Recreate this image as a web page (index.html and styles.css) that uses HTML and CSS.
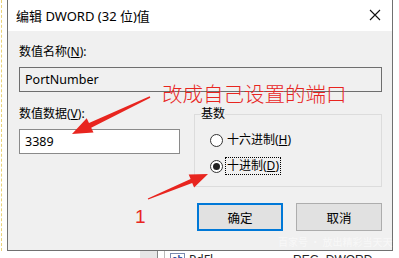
FILE: index.html
```html
<!DOCTYPE html>
<html lang="zh-CN">
<head>
    <meta charset="UTF-8">
    <meta name="viewport" content="width=device-width, initial-scale=1.0">
    <title>编辑 DWORD (32 位)值</title>
    <link rel="stylesheet" href="styles.css">
</head>
<body>

<div class="screen">
    <div class="top-row">
        <div class="left-strip"></div>

        <div class="dialog">
            <div class="titlebar">
                <span class="title">编辑 DWORD (32 位)值</span>
                <span class="close">
                    <svg width="12" height="12" viewBox="0 0 12 12">
                        <path d="M1 1 L11 11 M11 1 L1 11" stroke="#111" stroke-width="1.1" fill="none"/>
                    </svg>
                </span>
            </div>

            <div class="body">
                <div class="label">数值名称(<u>N</u>):</div>
                <div class="field readonly">PortNumber</div>

                <div class="data-row">
                    <div class="data-col">
                        <div class="label">数值数据(<u>V</u>):</div>
                        <div class="field small">3389</div>
                    </div>

                    <fieldset class="base-group">
                        <legend>基数</legend>
                        <div class="radio-row">
                            <span class="radio"></span>
                            <span class="radio-text">十六进制(<u>H</u>)</span>
                        </div>
                        <div class="radio-row">
                            <span class="radio checked"></span>
                            <span class="radio-text focus">十进制(<u>D</u>)</span>
                        </div>
                    </fieldset>
                </div>

                <div class="buttons">
                    <button class="btn default">确定</button>
                    <button class="btn">取消</button>
                </div>
            </div>
        </div>

        <div class="right-strip"></div>
    </div>

    <div class="list-row">
        <div class="list-gray"></div>
        <div class="list-sep"></div>
        <div class="list-icon">ab</div>
        <div class="list-name">PdFl</div>
        <div class="list-type">REG_DWORD</div>
    </div>

    <!-- annotations drawn on top of the screenshot -->
    <svg class="marks" width="399" height="258" viewBox="0 0 399 258">
        <polygon fill="#e8251f" points="149.7,96.3 89.0,123.1 86.7,118.2 72,134 93.5,132.6 91.2,127.7 150.3,97.7"/>
        <polygon fill="#e8251f" points="147.8,198.4 190.6,178.9 188.7,174.4 208,174 194.1,187.4 192.2,182.9 148.2,199.6"/>
    </svg>
    <div class="note">改成自己设置的端口</div>
    <div class="step">1</div>
    <div class="watermark">百家号 · 放出精彩当天天</div>
</div>

</body>
</html>
```

FILE: styles.css
```css
body {
    margin: 0;
    background-color: #fff;
    font-family: "Noto Sans", "Noto Sans CJK SC", sans-serif;
    font-size: 12px;
    color: #000;
}
.screen {
    position: relative;
    width: 399px;
    height: 258px;
    overflow: hidden;
}
.top-row {
    display: flex;
}
.left-strip {
    width: 7px;
    border-left: 1px dashed #e9d27a;
    margin-left: 1px;
    box-sizing: border-box;
    width: 6px;
}
.right-strip {
    flex: 1;
}
.dialog {
    width: 386px;
    height: 251px;
    box-sizing: border-box;
    border: 1px solid #707070;
    border-top: none;
    display: flex;
    flex-direction: column;
}
.titlebar {
    height: 31px;
    background-color: #fff;
    display: flex;
    align-items: center;
    justify-content: space-between;
    padding: 0 11px 0 8px;
}
.title {
    font-size: 13px;
    margin-top: -1px;
}
.close {
    display: flex;
    margin-top: -2px;
}
.body {
    flex: 1;
    background-color: #f0f0f0;
    padding: 13px 10px 0 11px;
}
.label {
    line-height: 16px;
    height: 16px;
}
.field {
    height: 25px;
    box-sizing: border-box;
    border: 1px solid #7a7a7a;
    margin-top: 7px;
    padding-left: 5px;
    display: flex;
    align-items: center;
    font-size: 12.5px;
}
.readonly {
    background-color: #f0f0f0;
    border-color: #6e6e6e;
}
.small {
    width: 161px;
    background-color: #fff;
    border-color: #8a8a8a;
}
.data-row {
    display: flex;
    justify-content: space-between;
    margin-top: 14px;
}
.base-group {
    width: 188px;
    height: 81px;
    box-sizing: border-box;
    margin: 0;
    border: 1px solid #dcdcdc;
    padding: 5px 0 0 15px;
}
.base-group legend {
    padding: 0;
    margin-left: -9px;
    line-height: 16px;
}
.radio-row {
    display: flex;
    align-items: center;
    height: 26px;
}
.radio {
    width: 13px;
    height: 13px;
    box-sizing: border-box;
    border: 1px solid #333;
    border-radius: 50%;
    background-color: #fff;
    display: flex;
    align-items: center;
    justify-content: center;
    margin-right: 2px;
}
.checked::after {
    content: "";
    width: 7px;
    height: 7px;
    border-radius: 50%;
    background-color: #222;
}
.radio-text {
    padding: 0 1px;
    line-height: 16px;
    border: 1px solid transparent;
}
.focus {
    border: 1px dotted #000;
}
.buttons {
    display: flex;
    justify-content: flex-end;
    gap: 13px;
    margin-top: 16px;
    padding-right: 0;
}
.btn {
    width: 86px;
    height: 28px;
    box-sizing: border-box;
    border: 1px solid #adadad;
    background-color: #e1e1e1;
    font-family: "Noto Sans CJK SC", sans-serif;
    font-size: 12.5px;
    color: #000;
    padding: 0;
}
.default {
    border: 2px solid #0078d7;
}
.list-row {
    display: flex;
    align-items: flex-start;
    height: 7px;
    font-size: 12px;
    line-height: 14px;
    color: #222;
}
.list-gray {
    width: 17px;
    height: 7px;
    margin-left: 140px;
    background-color: #e6e6e6;
}
.list-sep {
    width: 6px;
    height: 7px;
    border-left: 1px solid #888;
    border-right: 1px solid #bbb;
}
.list-icon {
    margin-left: 5px;
    font-size: 9px;
    font-weight: bold;
    color: #2a4a9a;
    border: 1px solid #7a8bb0;
    padding: 0 1px;
    line-height: 10px;
    margin-top: 2px;
}
.list-name {
    margin-left: 4px;
    margin-top: 2px;
}
.list-type {
    margin-left: 80px;
    margin-top: 2px;
    font-family: "Liberation Sans", sans-serif;
}
.marks {
    position: absolute;
    left: 0;
    top: 0;
}
.note {
    position: absolute;
    left: 162px;
    top: 80px;
    font-size: 20.5px;
    line-height: 26px;
    color: #e8251f;
    font-family: "Noto Sans CJK SC", sans-serif;
    font-weight: 300;
}
.step {
    position: absolute;
    left: 135px;
    top: 206px;
    font-family: "Liberation Sans", sans-serif;
    font-size: 19px;
    line-height: 22px;
    color: #e8251f;
}
.watermark {
    position: absolute;
    left: 278px;
    top: 234px;
    font-size: 10px;
    color: rgba(255, 255, 255, 0.55);
    font-family: "Noto Sans CJK SC", sans-serif;
}
```
